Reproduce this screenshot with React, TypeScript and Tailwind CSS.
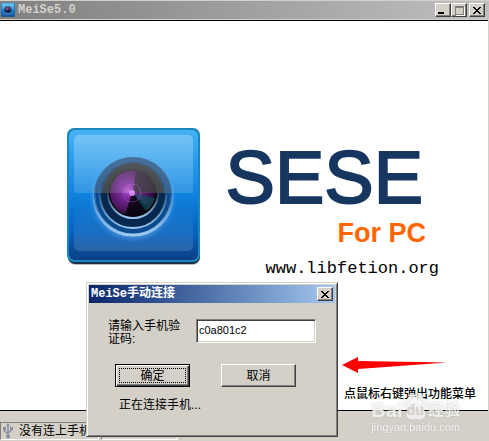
import { useState, type ReactNode } from 'react';

function CameraLogo({ className, id }: { className: string; id: string }) {
  return (
    <svg viewBox="0 0 136 140" className={className} aria-hidden="true">
      <defs>
        <linearGradient id={`${id}-body`} x1="0" y1="0" x2="0" y2="1">
          <stop offset="0" stopColor="#46b2f5" />
          <stop offset="0.45" stopColor="#1187e2" />
          <stop offset="0.8" stopColor="#0560bd" />
          <stop offset="1" stopColor="#0b3f84" />
        </linearGradient>
        <linearGradient id={`${id}-gloss`} x1="0" y1="0" x2="0" y2="1">
          <stop offset="0" stopColor="#fff" stopOpacity="0.26" />
          <stop offset="1" stopColor="#fff" stopOpacity="0.14" />
        </linearGradient>
        <linearGradient id={`${id}-low`} x1="0" y1="0" x2="0" y2="1">
          <stop offset="0.6" stopColor="#fff" stopOpacity="0" />
          <stop offset="1" stopColor="#fff" stopOpacity="0.14" />
        </linearGradient>
        <linearGradient id={`${id}-ring`} x1="0" y1="0" x2="0" y2="1">
          <stop offset="0.35" stopColor="#9cc8f0" stopOpacity="0" />
          <stop offset="1" stopColor="#9cc8f0" />
        </linearGradient>
        <radialGradient id={`${id}-glow`}>
          <stop offset="0.86" stopColor="#8fc8ff" stopOpacity="0.9" />
          <stop offset="1" stopColor="#4fa0f0" stopOpacity="0" />
        </radialGradient>
        <radialGradient id={`${id}-lens`} cx="0.4" cy="0.45" r="0.62">
          <stop offset="0" stopColor="#b458d6" />
          <stop offset="0.25" stopColor="#7a2a9c" />
          <stop offset="0.65" stopColor="#4e1862" />
          <stop offset="1" stopColor="#12061c" />
        </radialGradient>
      </defs>
      <rect x="2" y="5" width="132" height="133" rx="8" fill="#5a5048" opacity="0.4" />
      <rect x="2" y="3" width="132" height="134" rx="7" fill="#1b3148" />
      <rect x="1" y="1" width="133" height="134" rx="7" fill="#1b86bd" />
      <rect x="3" y="3" width="129" height="130" rx="6" fill={`url(#${id}-body)`} />
      <rect x="8" y="8" width="119" height="116" rx="5" fill={`url(#${id}-low)`} />
      <circle cx="67" cy="72" r="44" fill={`url(#${id}-glow)`} opacity="0.35" />
      <circle cx="67" cy="69" r="39" fill="#0a4a8e" stroke={`url(#${id}-ring)`} strokeWidth="3" />
      <circle cx="67" cy="68" r="33" fill="#06284e" stroke={`url(#${id}-ring)`} strokeWidth="2" />
      <circle cx="67" cy="66" r="25" fill="#000" stroke={`url(#${id}-ring)`} strokeWidth="2" />
      <circle cx="67" cy="66" r="23" fill={`url(#${id}-lens)`} />
      <path d="M66 66l-7 22a23 23 0 0 0 25-6z" fill="#05040a" opacity="0.85" />
      <path d="M67 66l22 5a23 23 0 0 1-9 13z" fill="#0b555c" opacity="0.65" />
      <path d="M67 66l3-23a23 23 0 0 1 20 22z" fill="#1a1a1c" opacity="0.75" />
      <circle cx="66" cy="66" r="9" fill="none" stroke="#a45abd" opacity="0.45" />
      <circle cx="66" cy="66" r="3" fill="#d77fec" />
      <path d="M28 66a39 36 0 0 1 78 0h-9a30 27 0 0 0-60 0z" fill="#1d4a75" opacity="0.55" />
      <path d="M37 66a30 30 0 0 1 60 0h-7a23 23 0 0 0-46 0z" fill="#2a2a2a" opacity="0.85" />
      <path d="M8 13a5 5 0 0 1 5-5h109a5 5 0 0 1 5 5v53H8z" fill={`url(#${id}-gloss)`} />
    </svg>
  );
}

function UsbIcon() {
  return (
    <svg viewBox="0 0 10 16" className="h-4 w-[10px]" fill="none" stroke="#8790a0" strokeWidth="1.5" aria-hidden="true">
      <path d="M5 2v11M1.500 5v3L5 11M8.500 5v2L5 10" />
      <path d="M3 3l2-3 2 3z" fill="#8790a0" stroke="none" />
      <path d="M0 4h3v3H0zM7 4h3v3H7z" fill="#8790a0" stroke="none" />
      <circle cx="5" cy="13.5" r="2" fill="#8790a0" stroke="none" />
    </svg>
  );
}

const raised =
  'border border-t-white border-l-white border-r-[#404040] border-b-[#404040] bg-[#d4d0c8] shadow-[inset_-1px_-1px_0_#808080]';

function CaptionButton({ label, onClick, children }: { label: string; onClick?: () => void; children: ReactNode }) {
  return (
    <button
      type="button"
      aria-label={label}
      onClick={onClick}
      className={`flex h-[14px] w-4 items-center justify-center ${raised}`}
    >
      {children}
    </button>
  );
}

function CloseGlyph() {
  return (
    <svg viewBox="0 0 8 7" className="h-[7px] w-2" fill="#000" shapeRendering="crispEdges" aria-hidden="true">
      <path d="M0 0h2v1H0zM6 0h2v1H6zM1 1h2v1H1zM5 1h2v1H5zM2 2h4v1H2zM3 3h2v1H3zM2 4h4v1H2zM1 5h2v1H1zM5 5h2v1H5zM0 6h2v1H0zM6 6h2v1H6z" />
    </svg>
  );
}

function ConnectDialog({ onClose }: { onClose: () => void }) {
  const [code, setCode] = useState('c0a801c2');

  return (
    <div
      role="dialog"
      aria-labelledby="dialog-title"
      className="absolute top-[282px] left-[86px] z-10 w-[252px] border border-t-[#d4d0c8] border-l-[#d4d0c8] border-r-[#404040] border-b-[#404040] bg-[#d4d0c8] p-[2px] shadow-[inset_1px_1px_0_#fff,inset_-1px_-1px_0_#808080]"
    >
      <div className="flex h-[18px] items-center justify-between bg-linear-to-r from-[#0a246a] to-[#a6caf0] px-[2px]">
        <h2
          id="dialog-title"
          className="font-['Liberation_Mono','Noto_Sans_CJK_SC',monospace] text-[12px] leading-[18px] font-bold text-white"
        >
          MeiSe手动连接
        </h2>
        <CaptionButton label="关闭" onClick={onClose}>
          <CloseGlyph />
        </CaptionButton>
      </div>
      <form className="px-[19px] pt-4 pb-[21px]" onSubmit={(e) => e.preventDefault()}>
        <div className="flex justify-between">
          <label htmlFor="code" className="w-[76px] pt-px leading-[13px]">
            请输入手机验证码:
          </label>
          <input
            id="code"
            type="text"
            value={code}
            onChange={(e) => setCode(e.target.value)}
            className="h-6 w-[120px] border border-t-[#808080] border-l-[#808080] border-r-white border-b-white bg-white pb-[3px] pl-[2px] text-[11px] shadow-[inset_1px_1px_0_#404040,inset_-1px_-1px_0_#d4d0c8] outline-none"
          />
        </div>
        <div className="mt-[18px] flex justify-between pr-[20px] pl-[7px]">
          <button
            type="submit"
            className="h-[23px] w-[75px] border border-black bg-[#d4d0c8] p-[3px] shadow-[inset_1px_1px_0_#fff,inset_-1px_-1px_0_#404040,inset_-2px_-2px_0_#808080]"
          >
            <span className="flex h-full items-center justify-center border border-dotted border-black">确定</span>
          </button>
          <button type="button" onClick={onClose} className={`h-[23px] w-[75px] ${raised}`}>
            取消
          </button>
        </div>
        <p className="mt-[10px] pl-[11px] leading-4">正在连接手机...</p>
      </form>
    </div>
  );
}

function Watermark() {
  return (
    <div className="absolute right-[29px] bottom-[7px] z-10 text-white/70 drop-shadow-[0_0_1px_#bbbbbb]">
      <div className="flex items-end justify-between">
        <span className="font-['Liberation_Sans',sans-serif] text-[20px] leading-5 font-bold">Bai</span>
        <span className="relative text-[14px] leading-5 font-bold">
          <svg viewBox="0 0 24 28" className="absolute bottom-0 left-[-3px] h-7 w-6" fill="#fff" opacity="0.7" aria-hidden="true">
            <ellipse cx="3" cy="13" rx="3" ry="4" />
            <ellipse cx="8" cy="5" rx="3" ry="4" />
            <ellipse cx="16" cy="5" rx="3" ry="4" />
            <ellipse cx="21" cy="13" rx="3" ry="4" />
            <path d="M12 11c3 0 4 3 6 5s4 4 3 8c-1 3-4 4-9 3-5 1-8 0-9-3-1-4 1-6 3-8s3-5 6-5z" />
          </svg>
          <span className="relative text-[#d4d0c8]">du</span>
        </span>
        <span className="text-[16px] leading-5 font-bold">经验</span>
      </div>
      <p className="font-['Liberation_Sans',sans-serif] text-[11px] leading-[14px]">jingyan.baidu.com</p>
    </div>
  );
}

export default function App() {
  const [dialogOpen, setDialogOpen] = useState(true);

  return (
    <div className="relative flex min-h-screen w-full flex-col bg-[#d4d0c8] font-['Liberation_Sans','Noto_Sans_CJK_SC',sans-serif] text-[12px] text-black">
      <header className="flex h-5 items-center justify-between border-y border-[#d4d0c8] bg-linear-to-r from-[#808080] to-[#c0c0c0] pr-1 pl-px">
        <div className="flex items-center gap-[3px]">
          <CameraLogo id="small" className="h-[14px] w-[14px]" />
          <h1 className="font-['Liberation_Mono','Noto_Sans_CJK_SC',monospace] text-[12px] leading-[18px] font-bold text-[#d4d0c8]">
            MeiSe5.0
          </h1>
        </div>
        <div className="flex">
          <CaptionButton label="最小化">
            <span className="mt-1.5 mr-1 h-[2px] w-1.5 bg-black" />
          </CaptionButton>
          <CaptionButton label="最大化">
            <span className="h-[9px] w-[9px] border border-t-2 border-[#808080] shadow-[1px_1px_0_#fff]" />
          </CaptionButton>
          <span className="w-[2px]" />
          <CaptionButton label="关闭">
            <CloseGlyph />
          </CaptionButton>
        </div>
      </header>

      <main className="mr-px flex flex-1 flex-col justify-between border-y border-black bg-white">
        <div className="flex pt-[106px] pl-[66px]">
          <CameraLogo id="large" className="h-[140px] w-[136px] shrink-0" />
          <div className="flex w-[237px] flex-col items-end pt-2">
            <p className="pr-4 text-[74px] leading-[86px] font-normal text-[#17365f] [-webkit-text-stroke:2px_#17365f]">
              SESE
            </p>
            <p className="pr-[13px] text-[27px] leading-6 font-bold text-[#ff6600]">For PC</p>
            <a
              href="http://www.libfetion.org"
              className="mt-2 font-['Liberation_Mono',monospace] text-[17px] leading-8 text-black"
            >
              www.libfetion.org
            </a>
          </div>
        </div>
        <p className="pr-3 pb-2 text-right leading-4 font-medium">点鼠标右键弹出功能菜单</p>
      </main>

      <footer className="flex h-[30px] items-end gap-[2px] pb-px">
        <div className="flex h-[18px] w-[99px] items-center gap-1.5 border border-t-[#808080] border-l-[#808080] border-r-white border-b-white pl-[2px] whitespace-nowrap">
          <UsbIcon />
          <span className="leading-4">没有连上手机</span>
        </div>
        <div className="h-[18px] w-[77px] border border-t-[#808080] border-l-[#808080] border-r-white border-b-white" />
      </footer>

      <svg viewBox="0 0 106 18" className="absolute top-[356px] left-[341px] h-[18px] w-[106px]" aria-hidden="true">
        <path d="M1 9L17 1v4l89 1.500L17 13v4z" fill="#f00" />
      </svg>
      {dialogOpen && <ConnectDialog onClose={() => setDialogOpen(false)} />}
      <Watermark />
    </div>
  );
}
